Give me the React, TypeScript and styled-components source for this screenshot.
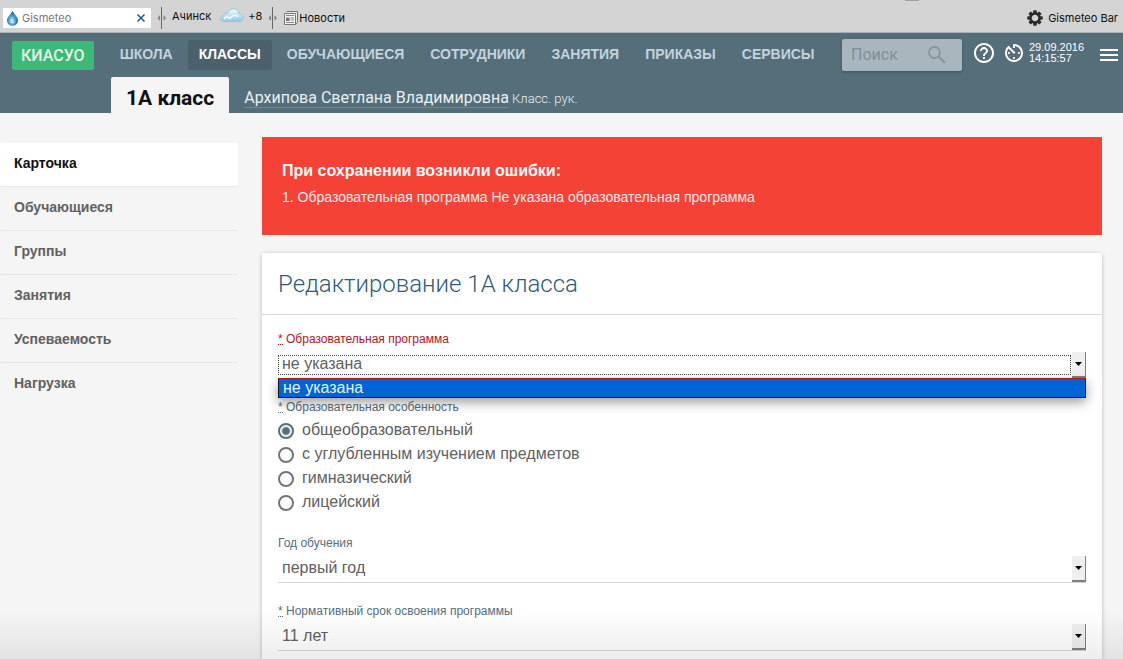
import React from "react";
import styled, { createGlobalStyle, css } from "styled-components";

const sans = `"Liberation Sans", Arial, sans-serif`;
const roboto = `Roboto, "Liberation Sans", sans-serif`;
const system = `Inter, "Liberation Sans", sans-serif`;

const GlobalStyle = createGlobalStyle`
  *, *::before, *::after { box-sizing: border-box; }
  body { margin: 0; background: #f5f5f5; font-family: ${sans}; color: #616161; }
  button, input, select { font: inherit; }
  button { cursor: pointer; }
`;

const Page = styled.div`
  min-height: 100vh;
  display: flex;
  flex-direction: column;
`;

/* ---------- browser toolbar ---------- */

const BrowserBar = styled.div`
  position: relative;
  display: flex;
  align-items: center;
  height: 33px;
  padding: 3px 5px 0 3px;
  background: #d4d4d4;
  border-bottom: 1px solid #a9afb2;
  font: 11px/14px ${system};
  color: #111;
`;

const WindowGrip = styled.span`
  position: absolute;
  top: 0;
  right: 204px;
  width: 14px;
  height: 1px;
  background: #a3a3a3;
`;

const WeatherSearch = styled.div`
  display: flex;
  align-items: center;
  gap: 3px;
  width: 148px;
  height: 20px;
  padding: 0 6px 0 3px;
  background: #fff;
`;

const WeatherInput = styled.input`
  flex: 1;
  min-width: 0;
  padding: 0;
  border: 0;
  outline: 0;
  background: none;
  color: #777;
`;

const PlainButton = styled.button`
  display: flex;
  align-items: center;
  padding: 0;
  border: 0;
  background: none;
  color: inherit;
`;

const Splitter = styled.span`
  display: flex;
  margin: 0 5px 0 6px;
`;

const City = styled(PlainButton)`
  gap: 4px;
  height: 26px;
  padding-bottom: 4px;
`;

const CityName = styled.span`
  margin-right: 5px;
`;

const BarSettings = styled(PlainButton)`
  gap: 5px;
  margin-left: auto;
`;

/* ---------- site header ---------- */

const Header = styled.header`
  background: #546e7a;
`;

const TopRow = styled.div`
  display: flex;
  align-items: center;
  height: 44px;
  padding: 0 5px 0 12px;
`;

const Brand = styled.a`
  flex: none;
  height: 29px;
  padding: 0 9px;
  border-radius: 2px;
  background: #3cb878;
  color: #e8f5e9;
  font: 500 16px/29px ${roboto};
  text-decoration: none;
`;

const Nav = styled.nav`
  display: flex;
  gap: 4px;
  margin-left: 15px;
`;

const NavLink = styled.a<{ $active?: boolean }>`
  height: 30px;
  padding: 0 11px;
  border-radius: 2px;
  font: bold 14px/29px ${sans};
  color: ${(p) => (p.$active ? "#fff" : "#c3d3de")};
  background: ${(p) => (p.$active ? "#4a616b" : "none")};
  text-decoration: none;
`;

const Tools = styled.div`
  display: flex;
  align-items: center;
  margin-left: auto;
  padding-bottom: 4px;
  color: #fff;
`;

const SearchBox = styled.div`
  display: flex;
  align-items: center;
  width: 120px;
  height: 32px;
  margin: 3px 10px 0 0;
  padding: 0 16px 0 9px;
  border-radius: 2px;
  background: #a9b6be;
  box-shadow: 0 1px 3px rgba(0, 0, 0, 0.25);
  color: #8695a0;
`;

const SearchInput = styled.input`
  flex: 1;
  min-width: 0;
  padding: 0;
  border: 0;
  outline: 0;
  background: none;
  font: 16px/20px ${roboto};
  &::placeholder { color: #7f8f98; opacity: 1; }
`;

const IconButtons = styled.div`
  display: flex;
  gap: 6px;
  margin-right: 3px;
`;

const Clock = styled.time`
  width: 71px;
  font: 11px/11px ${sans};
`;

const ClassRow = styled.div`
  display: flex;
  align-items: flex-end;
  height: 36px;
  padding-left: 111px;
`;

const ClassTab = styled.h1`
  margin: 0 15px 0 0;
  height: 36px;
  padding: 0 15px;
  border-radius: 2px 2px 0 0;
  background: #f5f5f5;
  color: #111;
  font: bold 21px/42px ${roboto};
`;

const Teacher = styled.p`
  margin: 0;
  color: #eceff1;
  font: 300 13px/28px ${roboto};
`;

const TeacherLink = styled.a`
  border-bottom: 1px solid #6f8994;
  color: #eceff1;
  font-size: 16px;
  font-weight: 400;
  text-decoration: none;
`;

/* ---------- page body ---------- */

const Body = styled.div`
  flex: 1;
  display: grid;
  grid-template-columns: 238px minmax(0, 1fr);
  gap: 24px;
  padding-right: 21px;
`;

const Sidebar = styled.nav`
  padding-top: 30px;
`;

const SideLink = styled.a<{ $active?: boolean }>`
  display: block;
  height: 44px;
  padding-left: 14px;
  border-bottom: 1px solid #e6e6e6;
  border-radius: 2px;
  font: bold 14px/41px ${sans};
  color: #616161;
  text-decoration: none;
  &:last-child { border-bottom-color: transparent; }
  ${(p) => p.$active && css`
    background: #fff;
    color: #111;
  `}
`;

const Main = styled.main`
  display: flex;
  flex-direction: column;
  gap: 18px;
  padding-top: 24px;
`;

const ErrorBox = styled.section`
  min-height: 98px;
  padding: 20px;
  background: #f44336;
  color: #ffebee;
`;

const ErrorTitle = styled.h2`
  margin: 0;
  font: bold 16px/28px ${sans};
  color: #fff;
`;

const ErrorList = styled.ol`
  margin: 0;
  padding: 0;
  list-style-position: inside;
  font: 14px/24px ${sans};
`;

const Card = styled.section`
  flex: 1;
  background: #fff;
  border-radius: 2px 2px 0 0;
  box-shadow: 0 1px 4px rgba(0, 0, 0, 0.25);
`;

const CardTitle = styled.h2`
  margin: 0;
  padding: 1px 16px 0;
  border-bottom: 1px solid #d3dcdd;
  color: #2f5b78;
  font: 300 24px/60px ${roboto};
`;

const Form = styled.form`
  display: flex;
  flex-direction: column;
  gap: 20px;
  padding: 16px 16px 0;
`;

const Field = styled.div`
  display: flex;
  flex-direction: column;
  gap: 4px;
`;

const labelText = css<{ $error?: boolean }>`
  font: 12px/16px ${sans};
  color: ${(p) => (p.$error ? "#b9141c" : "#546e7a")};
`;

const Label = styled.label<{ $error?: boolean }>`
  ${labelText}
`;

const Star = styled.abbr`
  display: inline-block;
  height: 14px;
  border-bottom: 1px dotted currentColor;
  text-decoration: none;
`;

const SelectWrap = styled.div`
  position: relative;
  display: flex;
`;

const Select = styled.select<{ $error?: boolean }>`
  appearance: none;
  width: 100%;
  height: 28px;
  padding: 0 20px 2px 4px;
  border: 0;
  border-bottom: 1px solid ${(p) => (p.$error ? "#b71c1c" : "#d3d3d3")};
  border-radius: 0;
  outline: 0;
  background: #fff;
  color: #616161;
  font: 16px/24px ${sans};
`;

const FocusFrame = styled.span`
  position: absolute;
  inset: 4px 15px 4px 0;
  border: 1px dotted #444;
  pointer-events: none;
`;

const Arrow = styled.span`
  position: absolute;
  top: 1px;
  right: 0;
  bottom: 1px;
  width: 14px;
  display: flex;
  align-items: center;
  justify-content: center;
  border: solid #808080;
  border-width: 0 1px 2px 0;
  background: #efefef;
  pointer-events: none;
`;

const Options = styled.ul`
  position: absolute;
  z-index: 1;
  top: 28px;
  left: 0;
  right: 0;
  margin: 0;
  padding: 0;
  border: solid #10182c;
  border-width: 0 1px 1px;
  box-shadow: 0 4px 12px rgba(0, 0, 0, 0.4);
  list-style: none;
`;

const Option = styled.li`
  padding-left: 4px;
  background: #0064d6;
  color: #e8f4ff;
  font: 16px/18px ${sans};
`;

const RadioGroup = styled.fieldset`
  margin: 0;
  padding: 0;
  border: 0;
`;

const Legend = styled.legend`
  ${labelText}
  padding: 0;
  margin-bottom: 4px;
`;

const RadioLabel = styled.label`
  display: flex;
  align-items: center;
  gap: 8px;
  font: 16px/24px ${sans};
`;

const RadioText = styled.span`
  padding-bottom: 2px;
  line-height: 22px;
`;

const Radio = styled.input`
  appearance: none;
  width: 16px;
  height: 16px;
  margin: 0;
  border: 2px solid #757575;
  border-radius: 50%;
  background: #fff;
  &:checked {
    border-color: #546e7a;
    background: radial-gradient(circle, #546e7a 0 3px, #fff 5px);
  }
`;

const BottomShade = styled.div`
  position: fixed;
  inset: auto 0 0;
  height: 48px;
  background: linear-gradient(transparent, rgba(0, 0, 0, 0.07));
  pointer-events: none;
`;

/* ---------- drawings ---------- */

const DropIcon = () => (
  <svg width="13" height="16" viewBox="0 0 13 16" aria-hidden="true">
    <defs>
      <radialGradient id="drop" cx="45%" cy="65%" r="60%">
        <stop offset="0" stopColor="#d8f2ff" />
        <stop offset="0.45" stopColor="#4aa5de" />
        <stop offset="1" stopColor="#174d95" />
      </radialGradient>
    </defs>
    <path d="M6.5 0.5C7.3 3.7 12 6.6 12 10.4a5.4 5.2 0 0 1-11 0C1 6.6 5.800 3.700 6.500.5z" fill="url(#drop)" />
    <path d="M3 10.500c.8 2 3.600 2.600 6 .7-.6 3-5.500 2.700-6-.7z" fill="#fff" opacity=".75" />
  </svg>
);

const CloseIcon = () => (
  <svg width="8" height="8" viewBox="0 0 8 8" aria-hidden="true">
    <path d="M.5.5l7 7M7.500.5l-7 7" stroke="#24588f" strokeWidth="1.500" />
  </svg>
);

const SplitterIcon = () => (
  <svg width="10" height="24" viewBox="0 0 10 24" aria-hidden="true">
    <path d="M4.500 1v22" stroke="#666" />
    <path d="M3 9v6L.5 12zM6.500 9v6L9 12z" fill="#858585" />
  </svg>
);

const CloudIcon = () => (
  <svg width="24" height="15" viewBox="0 0 24 15" aria-hidden="true">
    <defs>
      <linearGradient id="cloud" x1="0" y1="0" x2="0" y2="1">
        <stop offset="0" stopColor="#f4fbff" />
        <stop offset="1" stopColor="#8ec8ea" />
      </linearGradient>
    </defs>
    <path
      d="M4 13.500C1.700 13.500.600 12.300.600 10.800c0-1.700 1.400-2.700 3-2.800C4 5.600 5.800 4.900 7.500 5.300 8.600 2.300 10.800.900 13.500.900c3 0 5 1.800 5.500 4.400 2.600.2 4.300 1.900 4.300 4.300 0 2.300-1.600 3.900-4 3.900z"
      fill="url(#cloud)" stroke="#86bddd" strokeWidth=".7"
    />
    <path d="M4 11c2-2.500 4.500-2.500 6-.5 1.500-3 5-4 8-2" fill="none" stroke="#fff" strokeWidth="1.400" />
  </svg>
);

const NewsIcon = () => (
  <svg width="16" height="16" viewBox="0 0 16 16" aria-hidden="true">
    <path d="M3.500 1.500h11v11l-2 2" fill="#e6e6e6" stroke="#777" />
    <path d="M1.500 3.500h11v11h-11z" fill="#f5f5f5" stroke="#777" />
    <path d="M3 5.500h8M7.500 8H11M7.500 10H11M3 12.500h8" stroke="#888" />
    <path d="M3 7.500h3.500v3.500H3z" fill="#777" />
  </svg>
);

const GearIcon = () => (
  <svg width="16" height="16" viewBox="-8 -8 16 16" fill="#2b2b2b" aria-hidden="true">
    {[0, 45, 90, 135].map((a) => (
      <path key={a} transform={`rotate(${a})`} d="M-1.600-7.700h3.200L2.100-4h-4.200zM-1.600 7.700h3.200L2.100 4h-4.200z" />
    ))}
    <circle r="4.500" fill="none" stroke="#2b2b2b" strokeWidth="2.400" />
  </svg>
);

const SearchIcon = () => (
  <svg width="18" height="18" viewBox="0 0 18 18" fill="none" stroke="currentColor" aria-hidden="true">
    <circle cx="6.500" cy="6.500" r="5.500" strokeWidth="1.800" />
    <path d="M10.800 10.800l6 6" strokeWidth="2.200" />
  </svg>
);

const HelpIcon = () => (
  <svg width="24" height="24" viewBox="0 0 24 24" fill="currentColor" aria-hidden="true">
    <path d="M11 18h2v-2h-2v2zm1-16C6.480 2 2 6.480 2 12s4.480 10 10 10 10-4.480 10-10S17.520 2 12 2zm0 18c-4.410 0-8-3.590-8-8s3.590-8 8-8 8 3.590 8 8-3.590 8-8 8zm0-14c-2.210 0-4 1.790-4 4h2c0-1.100.9-2 2-2s2 .9 2 2c0 2-3 1.750-3 5h2c0-2.250 3-2.500 3-5 0-2.210-1.790-4-4-4z" />
  </svg>
);

const TimelapseIcon = () => (
  <svg width="24" height="24" viewBox="0 0 24 24" fill="currentColor" aria-hidden="true">
    <path d="M11 17c0 .55.45 1 1 1s1-.45 1-1-.45-1-1-1-1 .45-1 1zm0-14v4h2V5.080c3.390.49 6 3.390 6 6.920 0 3.870-3.130 7-7 7s-7-3.130-7-7c0-1.680.59-3.220 1.580-4.420L12 13l1.410-1.410-6.800-6.800v.02C4.420 6.450 3 9.050 3 12c0 4.970 4.020 9 9 9 4.970 0 9-4.030 9-9s-4.030-9-9-9h-1zm7 9c0-.55-.45-1-1-1s-1 .45-1 1 .45 1 1 1 1-.45 1-1zM6 12c0 .55.45 1 1 1s1-.45 1-1-.45-1-1-1-1 .45-1 1z" />
  </svg>
);

const MenuIcon = () => (
  <svg width="18" height="16" viewBox="0 -4 18 16" fill="currentColor" aria-hidden="true">
    <path d="M0 0h18v2H0zM0 5h18v2H0zM0 10h18v2H0z" />
  </svg>
);

const ArrowDown = () => (
  <Arrow aria-hidden="true">
    <svg width="7" height="4" viewBox="0 0 7 4"><path d="M0 0h7L3.500 4z" fill="#000" /></svg>
  </Arrow>
);

/* ---------- content ---------- */

const sections = ["ШКОЛА", "КЛАССЫ", "ОБУЧАЮЩИЕСЯ", "СОТРУДНИКИ", "ЗАНЯТИЯ", "ПРИКАЗЫ", "СЕРВИСЫ"];
const pages = ["Карточка", "Обучающиеся", "Группы", "Занятия", "Успеваемость", "Нагрузка"];
const features = ["общеобразовательный", "с углубленным изучением предметов", "гимназический", "лицейский"];

type SelectFieldProps = {
  id: string;
  label: string;
  value: string;
  required?: boolean;
  error?: boolean;
  open?: boolean;
};

function SelectField({ id, label, value, required, error, open }: SelectFieldProps) {
  return (
    <Field>
      <Label htmlFor={id} $error={error}>
        {required && <><Star>*</Star>{" "}</>}{label}
      </Label>
      <SelectWrap>
        <Select id={id} $error={error} defaultValue={value}>
          <option>{value}</option>
        </Select>
        {open && <FocusFrame />}
        <ArrowDown />
        {open && (
          <Options role="listbox" aria-label={label}>
            <Option role="option" aria-selected="true">{value}</Option>
          </Options>
        )}
      </SelectWrap>
    </Field>
  );
}

export default function App() {
  return (
    <Page>
      <GlobalStyle />
      <BrowserBar>
        <WindowGrip />
        <WeatherSearch>
          <DropIcon />
          <WeatherInput aria-label="Gismeteo" defaultValue="Gismeteo" />
          <PlainButton aria-label="Очистить"><CloseIcon /></PlainButton>
        </WeatherSearch>
        <Splitter><SplitterIcon /></Splitter>
        <City><CityName>Ачинск</CityName><CloudIcon />+8</City>
        <Splitter><SplitterIcon /></Splitter>
        <PlainButton><NewsIcon />Новости</PlainButton>
        <BarSettings><GearIcon />Gismeteo Bar</BarSettings>
      </BrowserBar>

      <Header>
        <TopRow>
          <Brand href="#">КИАСУО</Brand>
          <Nav aria-label="Разделы">
            {sections.map((s) => (
              <NavLink key={s} href="#" $active={s === "КЛАССЫ"}>{s}</NavLink>
            ))}
          </Nav>
          <Tools>
            <SearchBox>
              <SearchInput type="text" placeholder="Поиск" aria-label="Поиск" />
              <SearchIcon />
            </SearchBox>
            <IconButtons>
              <PlainButton aria-label="Помощь"><HelpIcon /></PlainButton>
              <PlainButton aria-label="История"><TimelapseIcon /></PlainButton>
            </IconButtons>
            <Clock>29.09.2016<br />14:15:57</Clock>
            <PlainButton aria-label="Меню"><MenuIcon /></PlainButton>
          </Tools>
        </TopRow>
        <ClassRow>
          <ClassTab>1А класс</ClassTab>
          <Teacher><TeacherLink href="#">Архипова Светлана Владимировна</TeacherLink> Класс. рук.</Teacher>
        </ClassRow>
      </Header>

      <Body>
        <Sidebar aria-label="Класс">
          {pages.map((p) => (
            <SideLink key={p} href="#" $active={p === "Карточка"}>{p}</SideLink>
          ))}
        </Sidebar>
        <Main>
          <ErrorBox role="alert">
            <ErrorTitle>При сохранении возникли ошибки:</ErrorTitle>
            <ErrorList>
              <li>Образовательная программа Не указана образовательная программа</li>
            </ErrorList>
          </ErrorBox>
          <Card>
            <CardTitle>Редактирование 1А класса</CardTitle>
            <Form>
              <SelectField id="program" label="Образовательная программа" value="не указана" required error open />
              <RadioGroup>
                <Legend><Star>*</Star> Образовательная особенность</Legend>
                {features.map((f, i) => (
                  <RadioLabel key={f}>
                    <Radio type="radio" name="feature" defaultChecked={i === 0} />
                    <RadioText>{f}</RadioText>
                  </RadioLabel>
                ))}
              </RadioGroup>
              <SelectField id="year" label="Год обучения" value="первый год" />
              <SelectField id="term" label="Нормативный срок освоения программы" value="11 лет" required />
            </Form>
          </Card>
        </Main>
      </Body>
      <BottomShade />
    </Page>
  );
}
